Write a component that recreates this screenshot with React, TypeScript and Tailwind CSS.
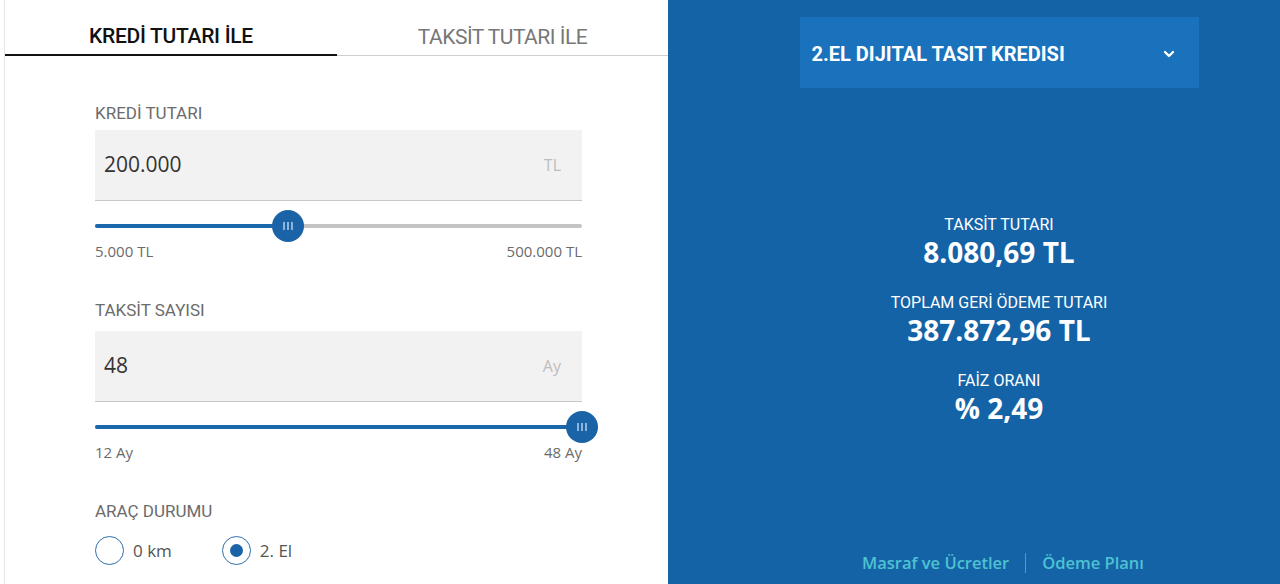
import { ChevronDown } from "lucide-react";

const label = "font-['Roboto',sans-serif] text-[17px] leading-[22px] text-[#6b6b6b]";
const value = "font-['Open_Sans',sans-serif]";

function Field({ title, amount, unit, gap }: { title: string; amount: string; unit: string; gap: string }) {
  return (
    <div>
      <div className={`${label} ${gap}`}>{title}</div>
      <div className="h-[71px] bg-[#f2f2f2] border-b border-[#c8c8c8] flex items-center justify-between pl-[9px] pr-[21px]">
        <span className={`${value} font-medium text-[21px] text-[#333]`}>{amount}</span>
        <span className={`${value} text-[16px] text-[#bdbdbd]`}>{unit}</span>
      </div>
    </div>
  );
}

function Slider({ pct, min, max }: { pct: number; min: string; max: string }) {
  return (
    <div>
      <div className="mt-[9px] h-[32px] flex items-center relative">
        <div className="h-[4px] w-full bg-[#c4c4c4] rounded-full">
          <div className="h-full bg-[#1a67ab] rounded-full" style={{ width: `${pct}%` }} />
        </div>
        <div
          className="absolute top-0 w-[32px] h-[32px] -ml-[16px] rounded-full bg-[#1a63a6] flex items-center justify-center gap-[2px]"
          style={{ left: `${pct}%` }}
        >
          <span className="w-[2px] h-[8px] bg-[#8db4da]" />
          <span className="w-[2px] h-[8px] bg-[#8db4da]" />
          <span className="w-[2px] h-[8px] bg-[#8db4da]" />
        </div>
      </div>
      <div className={`${value} flex justify-between text-[15px] leading-[18px] text-[#6b6b6b]`}>
        <span>{min}</span>
        <span>{max}</span>
      </div>
    </div>
  );
}

function Result({ title, amount, first }: { title: string; amount: string; first?: boolean }) {
  return (
    <div className={`flex flex-col items-center ${first ? "mt-[127px]" : "mt-[24px]"}`}>
      <div className="font-['Roboto',sans-serif] text-[16px] leading-[20px] text-white">{title}</div>
      <div className={`${value} font-bold text-[28px] leading-[34px] text-white`}>{amount}</div>
    </div>
  );
}

export default function App() {
  return (
    <div className="h-[584px] w-[1280px] flex bg-white overflow-hidden">
      {/* Sol: form */}
      <div className="w-[668px] pl-[4px] h-full">
        <div className="h-full border-l border-[#e6e6e6]">
          <div className="h-[56px] flex border-b border-[#cfcfcf]">
            <div className="w-[332px] flex items-end justify-center pb-[2px] border-b-2 border-[#111] -mb-px">
              <span className="font-['Roboto',sans-serif] font-medium text-[21px] text-[#111] tracking-[-0.3px]">KREDİ TUTARI İLE</span>
            </div>
            <div className="flex-1 flex items-end justify-center pb-[2px]">
              <span className="font-['Roboto',sans-serif] text-[21px] text-[#777] tracking-[-0.5px]">TAKSİT TUTARI İLE</span>
            </div>
          </div>

          <div className="pl-[90px] pt-[46px] w-[577px]">
            <Field title="KREDİ TUTARI" amount="200.000" unit="TL" gap="mb-[6px]" />
            <Slider pct={39.7} min="5.000 TL" max="500.000 TL" />

            <div className="mt-[39px]">
              <Field title="TAKSİT SAYISI" amount="48" unit="Ay" gap="mb-[10px]" />
              <Slider pct={100} min="12 Ay" max="48 Ay" />
            </div>

            <div className={`${label} mt-[39px]`}>ARAÇ DURUMU</div>
            <div className="mt-[14px] flex items-center">
              <div className="w-[29px] h-[29px] rounded-full border border-[#2f6fae]" />
              <span className={`${value} ml-[9px] text-[17px] text-[#555]`}>0 km</span>
              <div className="ml-[50px] w-[29px] h-[29px] rounded-full border border-[#2f6fae] flex items-center justify-center">
                <div className="w-[13px] h-[13px] rounded-full bg-[#1a63a6]" />
              </div>
              <span className={`${value} ml-[9px] text-[17px] text-[#555]`}>2. El</span>
            </div>
          </div>
        </div>
      </div>

      {/* Sağ: sonuç */}
      <div className="flex-1 h-full bg-[#1563a7] flex flex-col items-center pl-[50px] pb-[11px]">
        <div className="mt-[17px] w-[399px] h-[71px] bg-[#1a72bd] flex items-center justify-between pl-[12px] pr-[22px]">
          <span className="font-['Roboto',sans-serif] font-bold text-[20px] leading-[28px] mt-[3px] text-white">2.EL DIJITAL TASIT KREDISI</span>
          <ChevronDown size={16} strokeWidth={3.5} className="text-white mt-[3px]" />
        </div>

        <Result first title="TAKSİT TUTARI" amount="8.080,69 TL" />
        <Result title="TOPLAM GERİ ÖDEME TUTARI" amount="387.872,96 TL" />
        <Result title="FAİZ ORANI" amount="% 2,49" />

        <div className={`${value} mt-auto ml-[8px] flex items-center text-[16.5px] leading-[20px] font-semibold text-[#4ec2d2]`}>
          <span>Masraf ve Ücretler</span>
          <span className="mx-[16px] w-px h-[20px] bg-[#4ec2d2] opacity-70" />
          <span>Ödeme Planı</span>
        </div>
      </div>
    </div>
  );
}
